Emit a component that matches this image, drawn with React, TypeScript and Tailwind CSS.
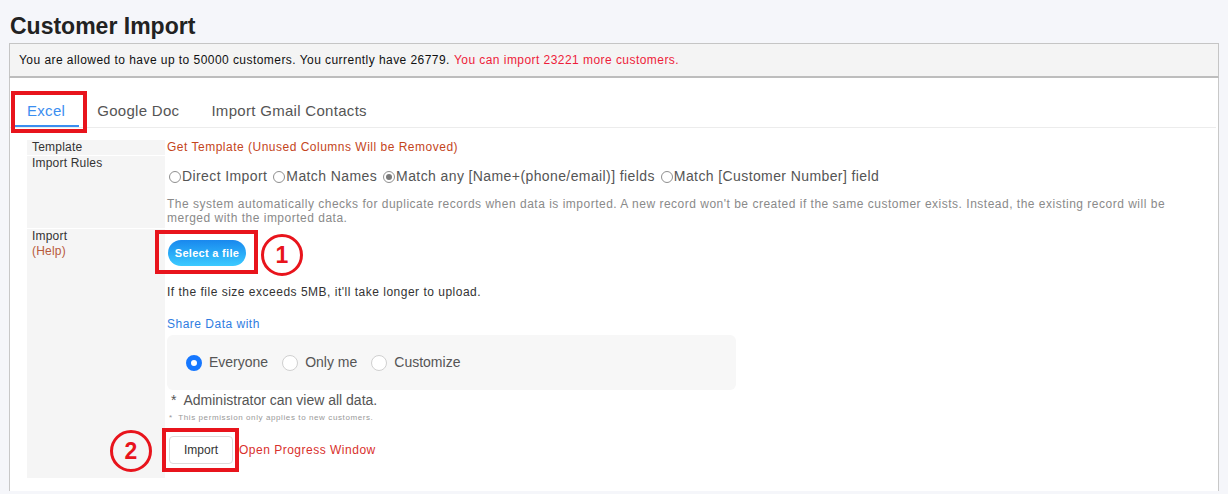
import React from "react";

const font = { fontFamily: '"Liberation Sans", Arial, Helvetica, sans-serif' };

function SmallRadio({ checked }: { checked?: boolean }) {
  return (
    <span className="inline-flex items-center justify-center w-[12px] h-[12px] rounded-full border border-[#8f8f8f] bg-white mr-[1px] ml-[2px] mt-[1px]">
      {checked && <span className="w-[6px] h-[6px] rounded-full bg-[#7a7a7a]" />}
    </span>
  );
}

function ShareRadio({ label, checked }: { label: string; checked?: boolean }) {
  return (
    <label className="flex items-center gap-[7px] mr-[14px]">
      {checked ? (
        <span className="w-[16px] h-[16px] rounded-full border-[5px] border-[#1677ff] bg-white" />
      ) : (
        <span className="w-[16px] h-[16px] rounded-full border border-[#d0d0d0] bg-white" />
      )}
      <span className="text-[14px] text-[#555]">{label}</span>
    </label>
  );
}

function Marker({ n, className }: { n: string; className: string }) {
  // red numbered ring used to annotate the screenshot
  return (
    <div
      className={`absolute w-[42px] h-[42px] rounded-full border-[3px] border-[#e8141c] flex items-center justify-center text-[23px] font-bold text-[#e8141c] ${className}`}
    >
      {n}
    </div>
  );
}

export default function App() {
  return (
    <div style={font} className="relative min-h-screen w-full bg-[#f5f6fa] pt-[15px]">
      <h1 className="pl-[10px] text-[23px] leading-[23px] font-bold text-[#222] mb-[5px]">Customer Import</h1>

      <div className="mx-[9px] h-[35px] flex items-center pl-[9px] bg-[#f4f4f4] border border-[#c5c5c5] border-b-2 border-b-[#bdbdbd] text-[12px] tracking-[0.45px] text-[#111]">
        <span>You are allowed to have up to 50000 customers. You currently have 26779.</span>
        <span className="ml-[4px] text-[#ee1d3a]">You can import 23221 more customers.</span>
      </div>

      <div className="mx-[9px] h-[413px] bg-white border-x border-[#c8c8c8]">
        <div className="flex pl-[3px] mr-[2px] border-b border-[#ececec] tracking-[0.3px]">
          <div className="px-[14px] pt-[24px] pb-[6px] border-b-2 border-[#3b8ef0] text-[15px] leading-[17px] text-[#3b8ef0]">Excel</div>
          <div className="ml-[4px] px-[14px] pt-[24px] pb-[8px] text-[15px] leading-[17px] text-[#555]">Google Doc</div>
          <div className="ml-[4px] px-[14px] pt-[24px] pb-[8px] text-[15px] leading-[17px] text-[#555]">Import Gmail Contacts</div>
        </div>

        <div className="mt-[12px] ml-[17px] mr-[17px] grid grid-cols-[138px_1fr] gap-x-[2px] gap-y-[1px] text-[12px] leading-[15px] tracking-[0.5px]">
          <div className="bg-[#f5f5f5] pl-[5px] h-[15px] text-[#333] tracking-[0.2px]">Template</div>
          <div className="text-[#c4451c]">Get Template (Unused Columns Will be Removed)</div>

          <div className="bg-[#f5f5f5] pl-[5px] text-[#333] tracking-[0.2px]">Import Rules</div>
          <div className="pt-[10px] pb-[1px]">
            <div className="flex items-center text-[14px] leading-[20px] tracking-[0.4px] text-[#555]">
              <SmallRadio />
              <span className="mr-[4px]">Direct Import</span>
              <SmallRadio />
              <span className="mr-[4px]">Match Names</span>
              <SmallRadio checked />
              <span className="mr-[4px]">Match any [Name+(phone/email)] fields</span>
              <SmallRadio />
              <span>Match [Customer Number] field</span>
            </div>
            <p className="mt-[11px] pb-[2px] text-[12px] leading-[14px] text-[#8a8a8a]">
              The system automatically checks for duplicate records when data is imported. A new record won't be created if the same customer exists. Instead, the existing record will be
              <br />
              merged with the imported data.
            </p>
          </div>

          <div className="bg-[#f5f5f5] pl-[5px] text-[#333] tracking-[0.2px]">
            <div>Import</div>
            <div className="text-[#b85a3c]">(Help)</div>
          </div>
          <div className="pt-[11px] pb-[14px]">
            <button className="ml-[1px] w-[78px] h-[26px] rounded-full bg-gradient-to-b from-[#1a88ee] to-[#3ccaff] text-white text-[11px] font-bold tracking-[0.3px]">
              Select a file
            </button>
            <p className="mt-[19px] text-[#333]">If the file size exceeds 5MB, it'll take longer to upload.</p>
            <p className="mt-[17px] text-[#2f7de1]">Share Data with</p>
            <div className="mt-[3px] w-[569px] h-[55px] rounded-md bg-[#f7f7f7] flex items-center pl-[19px] tracking-normal">
              <ShareRadio label="Everyone" checked />
              <ShareRadio label="Only me" />
              <ShareRadio label="Customize" />
            </div>
            <p className="mt-[1px] pl-[4px] text-[14px] leading-[18px] tracking-normal text-[#555]">
              *<span className="ml-[7px]">Administrator can view all data.</span>
            </p>
            <p className="mt-[4px] pl-[2px] text-[8px] leading-[10px] text-[#999] tracking-[0.6px]">*&nbsp; This permission only applies to new customers.</p>
            <div className="mt-[13px] flex items-center">
              <button className="ml-[2px] w-[64px] h-[28px] rounded-[4px] border border-[#dcdcdc] bg-white text-[12px] tracking-normal text-[#333]">Import</button>
              <span className="ml-[6px] text-[#d9302c]">Open Progress Window</span>
            </div>
          </div>
        </div>
      </div>

      {/* annotation overlays */}
      <div className="absolute left-[11px] top-[91px] w-[76px] h-[42px] border-4 border-[#e8141c]" />
      <div className="absolute left-[155px] top-[230px] w-[103px] h-[44px] border-4 border-[#e8141c]" />
      <Marker n="1" className="left-[261px] top-[234px]" />
      <div className="absolute left-[162px] top-[428px] w-[77px] h-[44px] border-4 border-[#e8141c]" />
      <Marker n="2" className="left-[110px] top-[430px]" />
    </div>
  );
}
